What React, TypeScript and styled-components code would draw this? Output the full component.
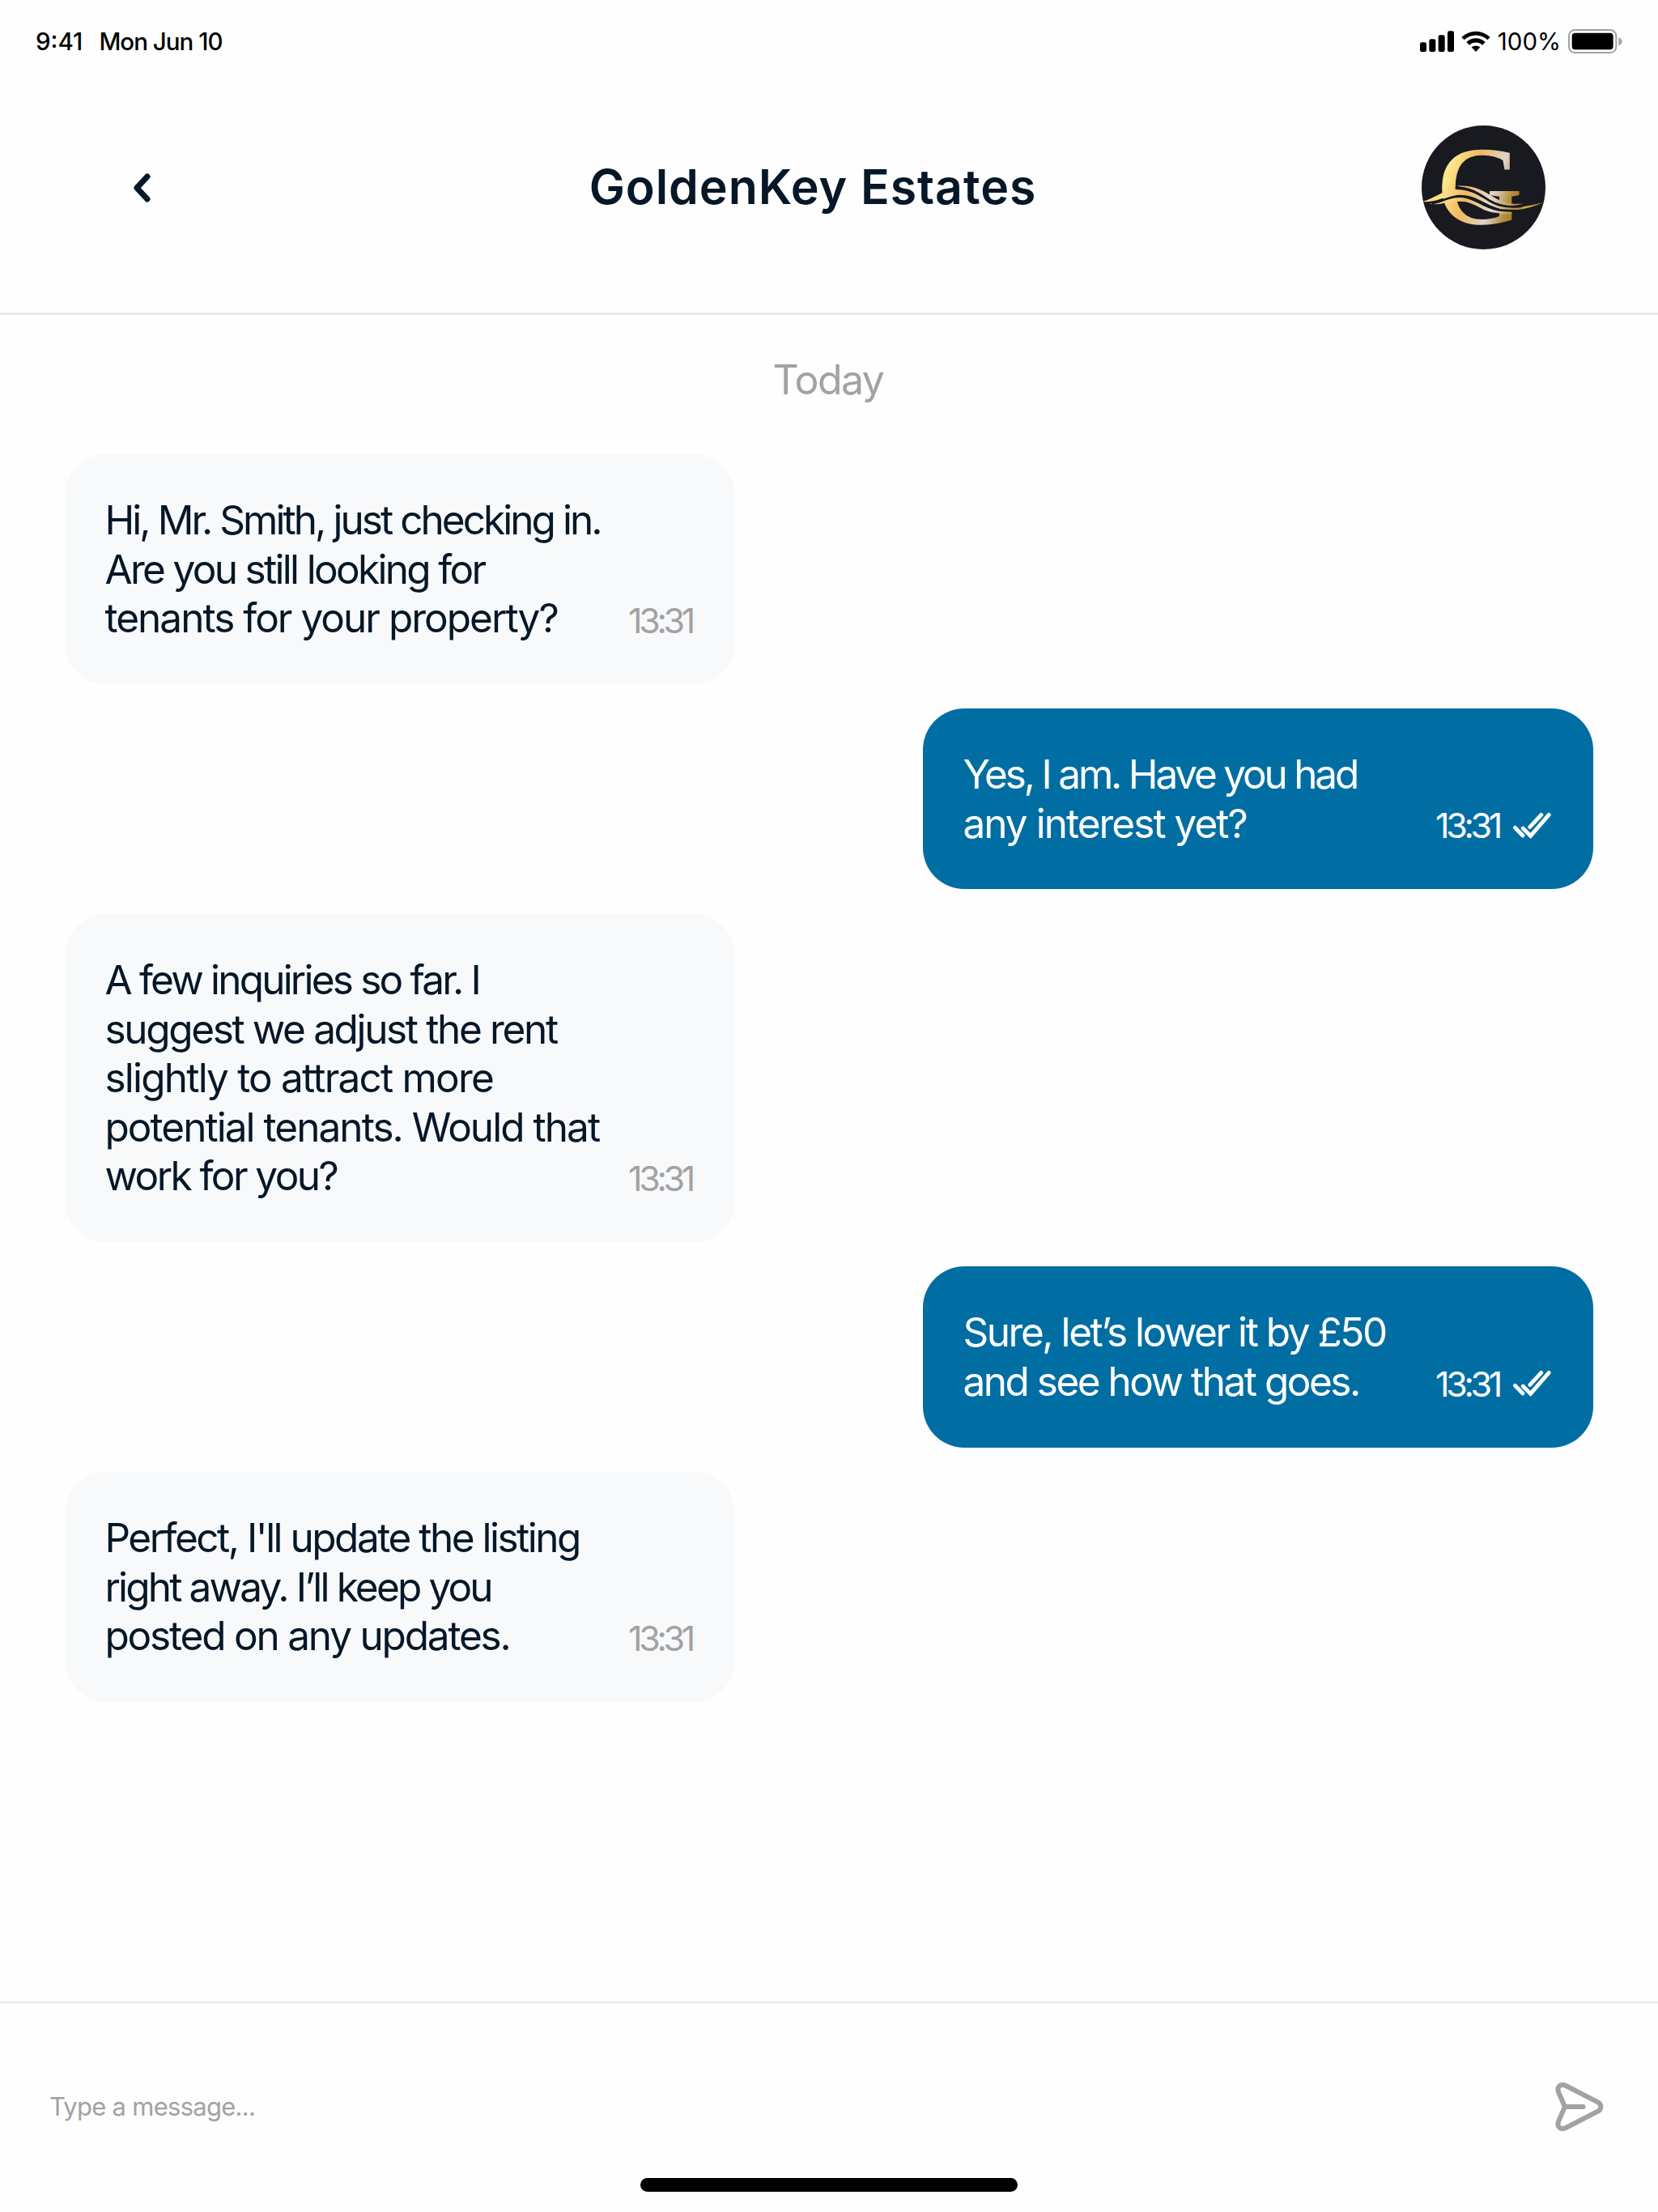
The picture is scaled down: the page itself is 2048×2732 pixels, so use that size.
import React from "react";
import styled, { createGlobalStyle, css } from "styled-components";

interface Line {
  text: string;
  tracking: number;
}

interface Message {
  id: number;
  mine: boolean;
  time: string;
  lines: Line[];
}

const messages: Message[] = [
  {
    id: 1,
    mine: false,
    time: "13:31",
    lines: [
      { text: "Hi, Mr. Smith, just checking in.", tracking: -2.95 },
      { text: "Are you still looking for", tracking: -2.68 },
      { text: "tenants for your property?", tracking: -1.98 },
    ],
  },
  {
    id: 2,
    mine: true,
    time: "13:31",
    lines: [
      { text: "Yes, I am. Have you had", tracking: -3.2 },
      { text: "any interest yet?", tracking: -1.98 },
    ],
  },
  {
    id: 3,
    mine: false,
    time: "13:31",
    lines: [
      { text: "A few inquiries so far. I", tracking: -2.8 },
      { text: "suggest we adjust the rent", tracking: -2.36 },
      { text: "slightly to attract more", tracking: -1.8 },
      { text: "potential tenants. Would that", tracking: -1.96 },
      { text: "work for you?", tracking: -2.56 },
    ],
  },
  {
    id: 4,
    mine: true,
    time: "13:31",
    lines: [
      { text: "Sure, let’s lower it by £50", tracking: -2.46 },
      { text: "and see how that goes.", tracking: -2.5 },
    ],
  },
  {
    id: 5,
    mine: false,
    time: "13:31",
    lines: [
      { text: "Perfect, I'll update the listing", tracking: -2.5 },
      { text: "right away. I’ll keep you", tracking: -2.84 },
      { text: "posted on any updates.", tracking: -2.2 },
    ],
  },
];

const SignalIcon = () => (
  <svg width="42" height="26" viewBox="0 0 126 78">
    <rect x="0" y="43" width="24" height="35" rx="7" />
    <rect x="34" y="31" width="24" height="47" rx="7" />
    <rect x="68" y="16" width="24" height="62" rx="7" />
    <rect x="102" y="1" width="24" height="77" rx="7" />
  </svg>
);

const WifiIcon = () => (
  <svg width="36" height="26" viewBox="0 0 108 78">
    <path d="M1 24 A76 76 0 0 1 107 24 L97 34 A61 61 0 0 0 11 34 Z" />
    <path d="M19 42 A50 50 0 0 1 89 42 L78 53 A35 35 0 0 0 30 53 Z" />
    <path d="M38 61 A25 25 0 0 1 70 61 L54 78 Z" />
  </svg>
);

const BatteryIcon = () => (
  <svg width="67" height="30" viewBox="0 0 201 90">
    <rect x="3" y="3" width="175" height="84" rx="22" fill="none" stroke="#a0a0a0" strokeWidth="6" />
    <rect x="14" y="14" width="153" height="62" rx="12" />
    <path d="M187 31 C204 37 204 54 187 60 Z" fill="#a0a0a0" />
  </svg>
);

const BackIcon = () => (
  <svg width="22" height="36" viewBox="0 0 22 36" fill="none">
    <path d="M17 4 L4 18 L17 32" stroke="#061727" strokeWidth="7" strokeLinecap="round" strokeLinejoin="round" />
  </svg>
);

const DoubleCheckIcon = () => (
  <svg width="49" height="33" viewBox="0 0 49 33" fill="none" stroke="#fff" strokeWidth="4.8" strokeLinecap="round">
    <path d="M3.4 19.3 L13 29" />
    <path d="M13.2 20 L22.6 29.4 L45.2 3.4" />
    <path d="M21.8 18.4 L35.8 3.4" />
  </svg>
);

const SendIcon = () => (
  <svg width="60" height="60" viewBox="0 0 60 60" fill="none" stroke="#a2a2a2" strokeWidth="6" strokeLinecap="round" strokeLinejoin="round">
    <path d="M12 30 L4.4 12.8 C1.2 5.6 6.6 0.8 13.2 4 L53.2 24.6 C57.4 27.2 57.4 32.8 53.2 35.4 L13.2 56 C6.6 59.2 1.2 54.4 4.4 47.2 Z" />
    <path d="M12 30 H34.5" />
  </svg>
);

const BrandMark = () => (
  <svg width="153" height="153" viewBox="78 75 459 459">
    <defs>
      <linearGradient id="gold" gradientUnits="userSpaceOnUse" x1="150" y1="305" x2="403" y2="386">
        <stop offset="0" stopColor="#fde68c" />
        <stop offset="0.32" stopColor="#efb860" />
        <stop offset="0.66" stopColor="#ddd5cb" />
        <stop offset="0.88" stopColor="#b5913f" />
        <stop offset="1" stopColor="#a27b24" />
      </linearGradient>
      <linearGradient id="ribbon" gradientUnits="userSpaceOnUse" x1="82" y1="0" x2="530" y2="0">
        <stop offset="0" stopColor="#fde58a" />
        <stop offset="0.2" stopColor="#fbdc80" />
        <stop offset="0.36" stopColor="#efb860" />
        <stop offset="0.56" stopColor="#e3dbd3" />
        <stop offset="0.76" stopColor="#b58e38" />
        <stop offset="0.88" stopColor="#d0a848" />
        <stop offset="1" stopColor="#b88a2c" />
      </linearGradient>
    </defs>
    <circle cx="307.5" cy="304.5" r="229.5" fill="#191a20" />
    <Initial x="131.5" y="437" transform="scale(1.055 1)">
      G
    </Initial>
    <g fill="url(#ribbon)">
      <path d="M82 357 C125 346 155 314 208 312 C262 312 295 338 340 362 C392 386 450 380 530 360 C472 386 415 396 362 382 C312 366 275 332 222 332 C160 332 140 362 82 357 Z" />
      <path d="M208 299 C264 294 306 314 342 338 C378 361 410 367 454 365 C408 377 368 374 332 352 C290 322 262 306 208 299 Z" />
      <path d="M105 364 C150 364 168 344 222 342 C275 342 305 384 370 390 C385 392 400 392 412 392 L412 402 C370 402 340 400 310 388 C280 372 255 356 222 356 L168 360 C145 368 125 368 105 364 Z" />
    </g>
    {/* dark grooves between the ribbons */}
    <g fill="none" stroke="#191a20" strokeWidth="8" strokeLinecap="round">
      <path d="M207 306 C256 304 290 328 330 354 C368 376 410 380 450 374" />
      <path d="M120 363 C162 356 172 338 222 337 C272 337 312 384 372 389 C392 391 410 391 425 391" />
    </g>
  </svg>
);

const App: React.FC = () => {
  return (
    <Screen>
      <GlobalStyle />

      {/* Status Bar */}
      <StatusBar>
        <StatusGroup $gap={20}>
          <StatusText>9:41</StatusText>
          <StatusText $tracking={-0.99}>Mon Jun 10</StatusText>
        </StatusGroup>
        <StatusGroup $gap={9}>
          <SignalIcon />
          <WifiIcon />
          <StatusText $light>100%</StatusText>
          <BatteryIcon />
        </StatusGroup>
      </StatusBar>

      {/* Header */}
      <Header>
        <BackButton aria-label="Back">
          <BackIcon />
        </BackButton>
        <Title>GoldenKey Estates</Title>
        <Avatar>
          <BrandMark />
        </Avatar>
      </Header>

      {/* Conversation */}
      <Conversation>
        <DayLabel>Today</DayLabel>
        <MessageList>
          {messages.map((message) => (
            <Bubble key={message.id} $mine={message.mine}>
              <Body>
                {message.lines.map((line) => (
                  <TextLine key={line.text} $tracking={line.tracking}>
                    {line.text}
                  </TextLine>
                ))}
              </Body>
              <Meta $mine={message.mine}>
                <Time>{message.time}</Time>
                {message.mine && <DoubleCheckIcon />}
              </Meta>
            </Bubble>
          ))}
        </MessageList>
      </Conversation>

      {/* Composer */}
      <Footer>
        <Composer>
          <Placeholder>Type a message...</Placeholder>
          <SendButton aria-label="Send">
            <SendIcon />
          </SendButton>
        </Composer>
        <HomeIndicator />
      </Footer>
    </Screen>
  );
};

const GlobalStyle = createGlobalStyle`
  * {
    box-sizing: border-box;
  }

  body {
    margin: 0;
    background-color: #fefefe;
    font-family: Inter, "Open Sans", sans-serif;
  }

  button {
    padding: 0;
    border: none;
    background: none;
  }

  svg {
    display: block;
    flex-shrink: 0;
  }
`;

const Screen = styled.div`
  display: flex;
  flex-direction: column;
  width: 2048px;
  height: 2732px;
  overflow: hidden;
  color: #061727;
`;

const StatusBar = styled.div`
  display: flex;
  align-items: center;
  justify-content: space-between;
  height: 104px;
  padding: 0 44px 2px;
  color: #000;
`;

const StatusGroup = styled.div<{ $gap: number }>`
  display: flex;
  align-items: center;
  gap: ${(props) => props.$gap}px;
`;

const StatusText = styled.span<{ $tracking?: number; $light?: boolean }>`
  font-size: 29.5px;
  font-weight: ${(props) => (props.$light ? 400 : 500)};
  letter-spacing: ${(props) => props.$tracking || 0}px;
`;

const Header = styled.header`
  display: flex;
  align-items: center;
  justify-content: space-between;
  height: 285px;
  padding: 0 139px 27px;
  border-bottom: 3px solid #e8e8e8;
`;

const BackButton = styled.button`
  width: 113px;
  padding-left: 26px;
`;

const Title = styled.h1`
  margin: 0 0 2px;
  font-size: 59px;
  font-weight: 600;
  letter-spacing: 0.95px;
`;

const Avatar = styled.div`
  width: 153px;
  height: 153px;
`;

const Initial = styled.text`
  font-family: "Liberation Serif", serif;
  font-size: 409px;
  fill: url(#gold);
  stroke: url(#gold);
  stroke-width: 5px;
`;

const Conversation = styled.main`
  flex: 1;
`;

const DayLabel = styled.div`
  height: 172px;
  padding-right: 2px;
  font-size: 50px;
  letter-spacing: -1.5px;
  line-height: 161px;
  text-align: center;
  color: #a2a2a2;
`;

const MessageList = styled.div`
  display: flex;
  flex-direction: column;
  gap: 30.5px;
  padding: 0 80px;
`;

const Bubble = styled.div<{ $mine: boolean }>`
  display: flex;
  align-items: flex-end;
  justify-content: space-between;
  align-self: flex-start;
  width: 828px;
  padding: 51px 51px 51px 49.5px;
  border-radius: 51px;
  background-color: #f8f9fb;

  ${(props) =>
    props.$mine &&
    css`
      align-self: flex-end;
      background-color: #006ea3;
      color: #fff;
    `}
`;

const Body = styled.div`
  font-size: 49.5px;
  line-height: 60.6px;
`;

const TextLine = styled.div<{ $tracking: number }>`
  letter-spacing: ${(props) => props.$tracking}px;
  white-space: nowrap;
`;

const Meta = styled.div<{ $mine: boolean }>`
  display: flex;
  align-items: center;
  gap: 14px;
  color: ${(props) => (props.$mine ? "#fff" : "#a2a2a2")};
`;

const Time = styled.span`
  margin-right: 2px;
  font-size: 43px;
  letter-spacing: -4.3px;
  line-height: 56px;
`;

const Footer = styled.footer`
  height: 260px;
  padding-top: 64px;
  border-top: 2px solid #e8e8e8;
`;

const Composer = styled.div`
  display: flex;
  align-items: center;
  justify-content: space-between;
  height: 128px;
  padding: 0 67px 0 61px;
`;

const Placeholder = styled.span`
  padding-bottom: 2px;
  font-size: 31px;
  letter-spacing: -0.73px;
  color: #a2a2a2;
`;

const SendButton = styled.button`
  width: 60px;
  height: 60px;
`;

const HomeIndicator = styled.div`
  width: 466px;
  height: 16.5px;
  margin: 24px auto 0;
  border-radius: 9px;
  background-color: #000;
`;

export default App;
